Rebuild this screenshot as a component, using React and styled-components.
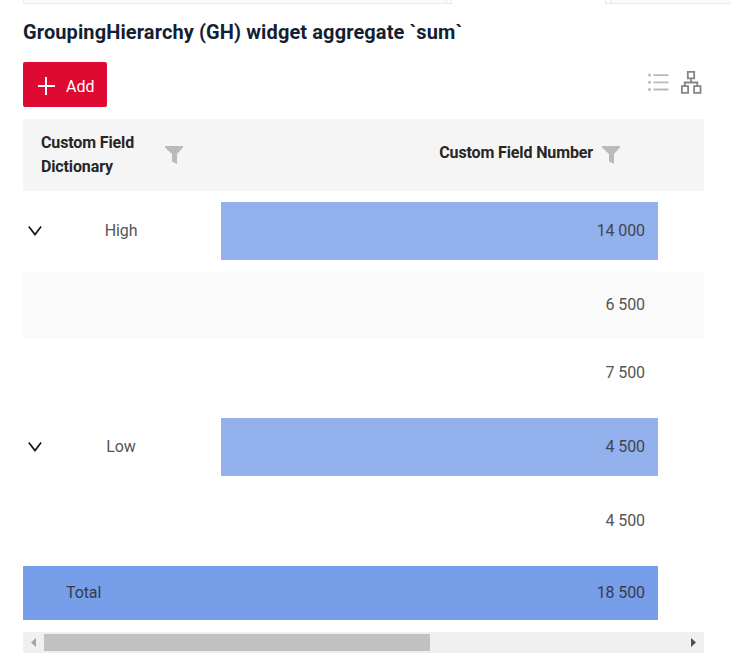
import React from "react";
import styled, { createGlobalStyle } from "styled-components";

const GlobalStyle = createGlobalStyle`
  * { box-sizing: border-box; }
  body {
    margin: 0;
    background: #fff;
    font-family: Roboto, "Liberation Sans", sans-serif;
    font-size: 16px;
    line-height: 24px;
    color: #555;
    overflow: hidden;
  }
  svg { display: block; flex: none; }
`;

const Page = styled.main`
  width: 731px;
  height: 666px;
  overflow: hidden;
`;

const PanelEdges = styled.div`
  display: flex;
  justify-content: space-between;
  height: 4px;
  padding-left: 23px;
`;

const PanelEdge = styled.div`
  display: flex;
  justify-content: ${(p) => (p.$handle === "end" ? "flex-end" : "flex-start")};
  width: ${(p) => p.$width}px;
  background: #fafafa;
  border: solid #ececec;
  border-width: 0 0 1px ${(p) => (p.$handle === "end" ? "1px" : "0")};
`;

const Handle = styled.span`
  width: 6px;
  height: 4px;
  background: #fff;
  border: 1px solid #e8e8e8;
  border-top: 0;
`;

const Widget = styled.section`
  width: 681px;
  margin-left: 23px;
`;

const Title = styled.h1`
  margin: 0;
  height: 58px;
  padding-top: 14px;
  font-size: 20px;
  line-height: 28px;
  font-weight: 700;
  letter-spacing: 0.11px;
  color: #141f35;
  white-space: nowrap;
`;

const Toolbar = styled.div`
  display: flex;
  justify-content: space-between;
  height: 57px;
`;

const AddButton = styled.button`
  display: flex;
  align-items: center;
  gap: 11px;
  width: 84px;
  height: 45px;
  padding: 3px 0 0 15px;
  border: 0;
  border-radius: 2px;
  background: #de0a32;
  color: #fff;
  font: inherit;
`;

const ButtonLabel = styled.span`
  padding-top: 2px;
`;

const Views = styled.div`
  display: flex;
  gap: 11px;
  padding: 8px 2px 0 0;
`;

const Header = styled.div`
  display: grid;
  grid-template-columns: 198px 437px;
  height: 72px;
  background: #f5f5f5;
  color: #262626;
  font-weight: 700;
`;

const HeaderCell = styled.div`
  display: flex;
  justify-content: ${(p) => (p.$end ? "flex-end" : "space-between")};
  align-items: flex-start;
  gap: 9px;
  padding: ${(p) => (p.$end ? "22px 38px 0 0" : "12px 38px 0 18px")};
`;

const HeaderLabel = styled.span`
  width: ${(p) => (p.$narrow ? "110px" : "auto")};
  letter-spacing: -0.13px;
`;

const FilterSlot = styled.span`
  padding-top: ${(p) => p.$top}px;
`;

const Row = styled.div`
  display: grid;
  grid-template-columns: 198px 437px;
  height: ${(p) => p.$height}px;
  padding-top: ${(p) => p.$top || 0}px;
  background: ${(p) => (p.$striped ? "#fafafa" : "#fff")};
`;

const GroupCell = styled.div`
  display: flex;
  align-items: center;
  height: 58px;
  padding-left: 5px;
`;

const GroupName = styled.span`
  width: 158px;
  text-align: center;
  letter-spacing: -0.1px;
`;

const ValueCell = styled.div`
  display: flex;
  align-items: center;
  justify-content: flex-end;
  height: ${(p) => (p.$group ? 58 : 66)}px;
  padding-right: 13px;
  letter-spacing: -0.1px;
  background: ${(p) => (p.$group ? "#92b1ed" : "transparent")};
  color: ${(p) => (p.$group ? "#40464f" : "#555")};
`;

const Total = styled.div`
  display: flex;
  justify-content: space-between;
  align-items: center;
  width: 635px;
  height: 54px;
  margin: 12px 0;
  padding: 0 13px 0 43px;
  letter-spacing: -0.1px;
  background: #779ee8;
  color: #343c4c;
`;

const Scrollbar = styled.div`
  display: flex;
  align-items: center;
  justify-content: space-between;
  height: 21px;
  background: #f0f0f0;
`;

const Thumb = styled.div`
  width: 386px;
  height: 17px;
  margin-right: auto;
  background: #c1c1c1;
`;

const ScrollArrow = ({ right }) => (
  <svg width="21" height="21" viewBox="0 0 21 21">
    {right ? <path d="M8 6v9l5-4.5z" fill="#505050" /> : <path d="M13 6v9l-5-4.5z" fill="#a3a3a3" />}
  </svg>
);

const Plus = () => (
  <svg width="17" height="18" viewBox="0 0 17 18" stroke="#fff" strokeWidth="2">
    <path d="M0 9h17M8 0v18" />
  </svg>
);

const Chevron = () => (
  <svg width="14" height="12" viewBox="0 0 14 12" fill="none" stroke="#111" strokeWidth="1.6">
    <path d="M.8 1.6 7 9.6l6.1-8" />
  </svg>
);

const Filter = () => (
  <svg width="18" height="18" viewBox="0 0 18 18" fill="#bababa">
    <path d="M0 0h18v1.5L12 8v10l-5-2.5V8L0 1.5z" />
  </svg>
);

const ListIcon = () => (
  <svg width="21" height="25" viewBox="0 0 21 25" fill="#bababa">
    <path d="M5.5 4.2h15v1.8h-15zM5.5 11.4h15v1.8h-15zM5.5 18.6h15v1.8h-15z" />
    <circle cx="1.5" cy="5" r="1.5" />
    <circle cx="1.5" cy="12.2" r="1.5" />
    <circle cx="1.5" cy="19.5" r="1.5" />
  </svg>
);

const TreeIcon = () => (
  <svg width="22" height="25" viewBox="0 0 22 25" fill="none" stroke="#858585" strokeWidth="1.8">
    <path d="M7.8 1.8h6.4v6.6H7.8zM1.9 16.2h6.2v6.6H1.9zM14.1 16.2h6.4v6.6h-6.4zM11 8.4v4.1M4.8 16.2v-3.7h12.5v3.7" />
  </svg>
);

const GroupRow = ({ name, value, top }) => (
  <Row $height={top === 11 ? 81 : 82} $top={top}>
    <GroupCell>
      <Chevron />
      <GroupName>{name}</GroupName>
    </GroupCell>
    <ValueCell $group>{value}</ValueCell>
  </Row>
);

const DetailRow = ({ value, striped, height = 67, top = 0 }) => (
  <Row $height={height} $striped={striped} $top={top}>
    <span />
    <ValueCell>{value}</ValueCell>
  </Row>
);

export default function App() {
  return (
    <Page>
      <GlobalStyle />
      <PanelEdges>
        <PanelEdge $width={429} $handle="end"><Handle /></PanelEdge>
        <PanelEdge $width={126} $handle="start"><Handle /></PanelEdge>
      </PanelEdges>
      <Widget>
        <Title>GroupingHierarchy (GH) widget aggregate `sum`</Title>
        <Toolbar>
          <AddButton><Plus /><ButtonLabel>Add</ButtonLabel></AddButton>
          <Views><ListIcon /><TreeIcon /></Views>
        </Toolbar>
        <Header>
          <HeaderCell>
            <HeaderLabel $narrow>Custom Field Dictionary</HeaderLabel>
            <FilterSlot $top={15}><Filter /></FilterSlot>
          </HeaderCell>
          <HeaderCell $end>
            <HeaderLabel>Custom Field Number</HeaderLabel>
            <FilterSlot $top={5}><Filter /></FilterSlot>
          </HeaderCell>
        </Header>
        <GroupRow name="High" value="14 000" top={11} />
        <DetailRow value="6 500" striped />
        <DetailRow value="7 500" top={1} />
        <GroupRow name="Low" value="4 500" top={12} />
        <DetailRow value="4 500" height={66} />
        <Total><span>Total</span><span>18 500</span></Total>
        <Scrollbar>
          <ScrollArrow />
          <Thumb />
          <ScrollArrow right />
        </Scrollbar>
      </Widget>
    </Page>
  );
}
